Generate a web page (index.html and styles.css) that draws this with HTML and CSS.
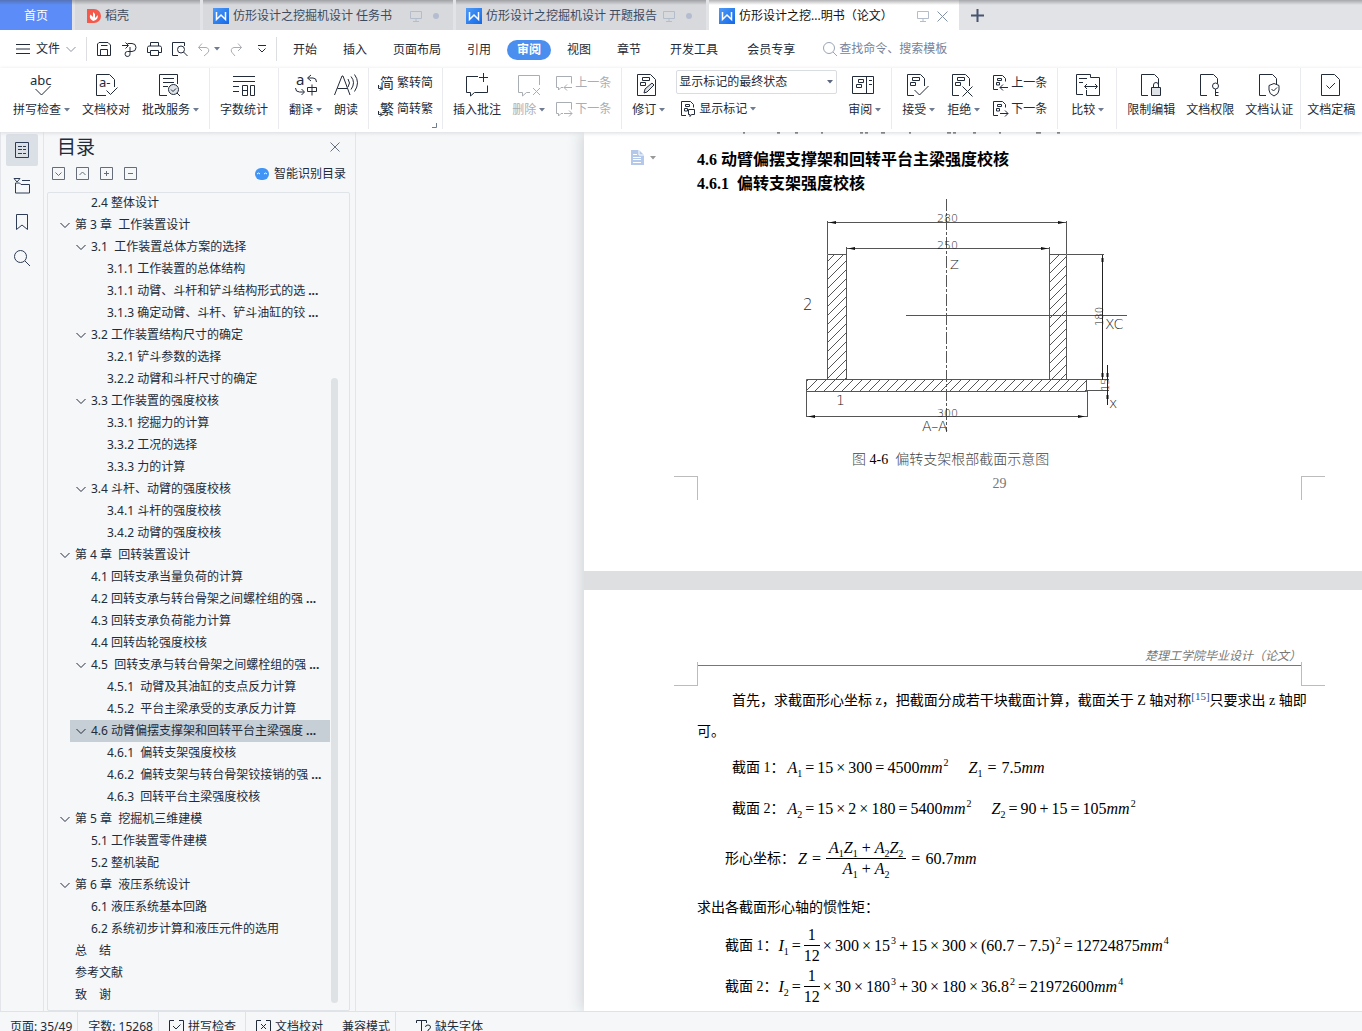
FILE: index.html
```html
<!DOCTYPE html>
<html lang="zh-CN">
<head>
<meta charset="utf-8">
<title>仿形设计之挖掘机设计 说明书（论文）</title>
<link rel="stylesheet" href="styles.css">
</head>
<body>
<svg class="sprite" aria-hidden="true">
  <defs>
    <linearGradient id="blue" x1="0" y1="0" x2="1" y2="1"><stop offset="0" stop-color="#4f9bf7"/><stop offset="1" stop-color="#1268e8"/></linearGradient>
    <pattern id="hatch" width="9" height="9" patternUnits="userSpaceOnUse"><path d="M-1 10L10 -1M-1 1L1 -1M8 10L10 8" stroke="#555" stroke-width="1"/></pattern>
  </defs>
  <symbol id="w" viewBox="0 0 16 16"><rect width="16" height="16" fill="url(#blue)" stroke="none"/><path d="M3.500 4v7.500L8 7l4.500 4.500V4" stroke="#fff" stroke-width="1.500"/></symbol>
  <symbol id="screen" viewBox="0 0 12 12"><path d="M.5 1.500h11v7H.5zM6 8.500v3M3 11.500h6"/></symbol>
  <symbol id="caret" viewBox="0 0 6 6"><path d="M0 1h6L3 4.500z" fill="currentColor" stroke="none"/></symbol>
  <symbol id="chev" viewBox="0 0 10 10"><path d="M.5 3L5 7.500 9.500 3"/></symbol>
  <symbol id="bubble" viewBox="0 0 24 24"><path d="M13 3.500H1.500v16h4V23l4-3.500h13v-7"/></symbol>
  <symbol id="sheet" viewBox="0 0 24 24"><path d="M9 22.500H2.500v-21h13l4 4V13"/></symbol>
  <symbol id="marks" viewBox="0 0 24 24"><path d="M7.500 4.500h7v3h-7zM5.500 9.500h5v3h-5z"/></symbol>
  <symbol id="smallsheet" viewBox="0 0 16 16"><path d="M6 14.500H1.500V.5h9l3 3v3M5.500 3.500h4v2h-4zM4.500 7.500h3v2.500h-3z"/></symbol>
  <symbol id="smallbubble" viewBox="0 0 16 16"><path d="M7 12.500H5L2.500 15v-2.500h-2V1.500h15v7"/></symbol>
</svg>

<nav class="tabs" aria-label="文档标签">
  <button class="tab tab-home">首页</button>
  <button class="tab tab-store"><svg width="14" height="14" viewBox="0 0 14 14"><path d="M0 0h7a7 7 0 0 1 0 14H0z" fill="#f4594b" stroke="none"/><path d="M6.500 12C2 10 2.500 7 3.500 5.500L6 8V3l2 2v4l3-3c0 4-2 5-4.500 6z" fill="#fff" stroke="none"/></svg>稻壳</button>
  <button class="tab tab-doc"><svg width="16" height="16"><use href="#w"/></svg>仿形设计之挖掘机设计 任务书<svg class="dim tab-screen" width="12" height="12"><use href="#screen"/></svg><i class="dot"></i></button>
  <button class="tab tab-doc"><svg width="16" height="16"><use href="#w"/></svg>仿形设计之挖掘机设计 开题报告<svg class="dim tab-near" width="12" height="12"><use href="#screen"/></svg><i class="dot"></i></button>
  <button class="tab tab-doc tab-on"><svg width="16" height="16"><use href="#w"/></svg>仿形设计之挖...明书（论文）<svg class="dim tab-far" width="12" height="12"><use href="#screen"/></svg><svg class="close" width="11" height="11" viewBox="0 0 11 11"><path d="M.5.5l10 10M10.500.5l-10 10"/></svg></button>
  <button class="tab-new" aria-label="新建"><svg width="13" height="13" viewBox="0 0 13 13"><path d="M6.500 0v13M0 6.500h13" stroke-width="2"/></svg></button>
</nav>

<div class="menu">
  <button class="file"><svg width="14" height="10" viewBox="0 0 14 10"><path d="M0 .5h14M0 5h14M0 9.500h14"/></svg>文件<svg class="soft" width="10" height="10"><use href="#chev"/></svg></button>
  <div class="quick">
    <button aria-label="保存"><svg width="15" height="15" viewBox="0 0 15 15"><path d="M.5 13.500V2L2 .5h9L13.500 3v10.500zM3.500 13.500v-6h7v6M4 3.500h6.500"/></svg></button>
    <button aria-label="输出"><svg width="15" height="15" viewBox="0 0 15 15"><path d="M0 3.500h6M3.500.5l3 3-3 3M5.500 1.500H10a4 4 0 0 1 0 8H6M8 5v6.500A2.500 2.500 0 1 1 5.500 9.500H8"/></svg></button>
    <button aria-label="打印"><svg width="15" height="15" viewBox="0 0 15 15"><path d="M3.500 4V.5h8V4M3.500 10.500h-3v-5l1-1.500h12l1 1.500v5h-3M3.500 8.500h8v5h-8z"/></svg></button>
    <button aria-label="打印预览"><svg width="16" height="15" viewBox="0 0 16 15"><path d="M6 13.500H.5V.5h12V4"/><circle cx="9" cy="7.500" r="3.500"/><path d="M11.500 10l4 4"/></svg></button>
    <button class="dim" aria-label="撤销"><svg width="12" height="13" viewBox="0 0 12 13"><path d="M4 .5l-3.500 4L4 8M.5 4.500H8a3 3 0 0 1 2 5L6 13"/></svg></button>
    <button class="near" aria-label="撤销列表"><svg width="6" height="6"><use href="#caret"/></svg></button>
    <button class="dim" aria-label="恢复"><svg width="12" height="13" viewBox="0 0 12 13"><path d="M8 .5l3.500 4L8 8M11.500 4.500H4a3 3 0 0 0-2 5L5 13"/></svg></button>
    <button class="last" aria-label="自定义"><svg width="8" height="8" viewBox="0 0 8 8"><path d="M0 .5h8M.5 3.500L4 7l3.500-3.500"/></svg></button>
  </div>
  <div class="menus">
    <button>开始</button><button>插入</button><button>页面布局</button><button>引用</button><button class="on">审阅</button><button>视图</button><button>章节</button><button class="wide">开发工具</button><button class="wide">会员专享</button>
  </div>
  <label class="search"><svg width="14" height="14" viewBox="0 0 14 14"><circle cx="6" cy="6" r="5.500"/><path d="M10 10l4 4"/></svg><input type="text" aria-label="查找命令" placeholder="查找命令、搜索模板"></label>
</div>

<div class="ribbon">
  <div class="group first">
    <button class="tool"><svg width="24" height="24" viewBox="0 0 24 24"><text x="0" y="12" font-size="13">abc</text><path d="M5.500 16l6 6 9-9"/></svg><span>拼写检查<svg class="caret" width="6" height="6"><use href="#caret"/></svg></span></button>
    <button class="tool"><svg width="24" height="24" viewBox="0 0 24 24"><path d="M12 22.500H2.500v-21h13l5 5V14M12.500 17.500l4 4 7-7"/><text x="5" y="14" font-size="13">a-</text></svg><span>文档校对</span></button>
    <button class="tool"><svg class="pull" width="24" height="24" viewBox="0 0 24 24"><path d="M10 22.500H2.500v-21h18V11M6 5.500h11M6 9.500h11M6 13.500h5"/><circle cx="16.500" cy="16.500" r="5" fill="#dfe3e8"/><path d="M14 16.500l2 2 3-3M20 20l3 3"/></svg><span>批改服务<svg class="caret" width="6" height="6"><use href="#caret"/></svg></span></button>
  </div>
  <div class="group">
    <button class="tool"><svg width="24" height="24" viewBox="0 0 24 24"><path d="M1 3.500h22M1 8.500h22M1 13.500h6M1 18.500h6M10.500 12.500h5v10h-5zM10.500 17.500h5M18.500 12.500h4v10h-4z"/></svg><span>字数统计</span></button>
  </div>
  <div class="group">
    <button class="tool"><svg width="24" height="24" viewBox="0 0 24 24"><text x="2" y="12" font-size="15">a</text><path d="M17 2l-3.500 3L17 8M14 5h5q3.500 0 3.500 4M1.500 15q0 4 4 4H10M7.500 16l3 3-3 3M13.500 14.500h9v4h-9zM18 11.500v11"/></svg><span>翻译<svg class="caret" width="6" height="6"><use href="#caret"/></svg></span></button>
    <button class="tool"><svg width="24" height="24" viewBox="0 0 24 24"><path d="M.5 22L8 3h1l7 19M3.500 15.500h10M14 6q3 4 0 8M17 3.500q5 6 0 13M20.500 1.500q6 8 0 17"/></svg><span>朗读</span></button>
  </div>
  <div class="group convert">
    <div class="stack">
      <button class="line"><svg width="16" height="16" viewBox="0 0 16 16"><text x="2" y="13" font-size="14">简</text><path d="M.5 10v3.500h3M2 11.500l2 2-2 2"/></svg>繁转简</button>
      <button class="line"><svg width="16" height="16" viewBox="0 0 16 16"><text x="2" y="13" font-size="14">繁</text><path d="M.5 10v3.500h3M2 11.500l2 2-2 2"/></svg>简转繁</button>
    </div>
    <svg class="launcher" width="5" height="5" viewBox="0 0 5 5"><path d="M0 4.500h4.500V0"/></svg>
  </div>
  <div class="group tight">
    <button class="tool"><svg width="24" height="24"><use href="#bubble"/><path d="M18.500 0v9M14 4.500h9"/></svg><span>插入批注</span></button>
    <button class="tool dim"><svg width="24" height="24" viewBox="0 0 24 24"><path d="M13 19.500H9.500L5.500 23v-3.500h-4v-17h21V12M16 15l7 7M23 15l-7 7"/></svg><span>删除<svg class="caret" width="6" height="6"><use href="#caret"/></svg></span></button>
    <div class="stack">
      <button class="line dim"><svg width="16" height="16"><use href="#smallbubble"/><path d="M16 12.500H8M11 9.500l-3 3 3 3"/></svg>上一条</button>
      <button class="line dim"><svg width="16" height="16"><use href="#smallbubble"/><path d="M8 12.500h8M13 9.500l3 3-3 3"/></svg>下一条</button>
    </div>
  </div>
  <div class="group tight">
    <button class="tool"><svg class="pull" width="24" height="24" viewBox="0 0 24 24"><path d="M2.500 1.500h13l5 5v16h-18z"/><use href="#marks"/><path d="M9 20l1-4 7-6 2 2-7 7z" fill="#dfe3e8"/></svg><span>修订<svg class="caret" width="6" height="6"><use href="#caret"/></svg></span></button>
    <div class="stack">
      <div class="combo"><select aria-label="显示状态"><option>显示标记的最终状态</option></select><svg width="6" height="6"><use href="#caret"/></svg></div>
      <button class="line inset"><svg width="16" height="16"><use href="#smallsheet"/><path d="M8.500 8.500h6v5h-3l-1.500 2v-2H8.500z" fill="#fff"/></svg>显示标记<svg class="caret" width="6" height="6"><use href="#caret"/></svg></button>
    </div>
    <button class="tool"><svg class="pull" width="24" height="24" viewBox="0 0 24 24"><path d="M1.500 3.500h21v17h-21zM15.500 3.500v17M18 7.500h3M18 11.500h3M7.500 6.500h5v3h-5zM5.500 11.500h5v3h-5z"/></svg><span>审阅<svg class="caret" width="6" height="6"><use href="#caret"/></svg></span></button>
  </div>
  <div class="group">
    <button class="tool"><svg class="pull" width="24" height="24"><use href="#sheet"/><use href="#marks"/><path d="M9.500 17l5 5 9-9"/></svg><span>接受<svg class="caret" width="6" height="6"><use href="#caret"/></svg></span></button>
    <button class="tool"><svg class="pull" width="24" height="24"><use href="#sheet"/><use href="#marks"/><path d="M12.500 13.500l10 10M22.500 13.500l-10 10"/></svg><span>拒绝<svg class="caret" width="6" height="6"><use href="#caret"/></svg></span></button>
    <div class="stack">
      <button class="line"><svg width="16" height="16"><use href="#smallsheet"/><path d="M16 12.500H8M11 9.500l-3 3 3 3"/></svg>上一条</button>
      <button class="line"><svg width="16" height="16"><use href="#smallsheet"/><path d="M8 12.500h8M13 9.500l3 3-3 3"/></svg>下一条</button>
    </div>
  </div>
  <div class="group roomy">
    <button class="tool"><svg width="24" height="24" viewBox="0 0 24 24"><path d="M7 21.500H.5v-20h14v3M3 5.500h8M3 9.500h4M14.500 4.500h9v18h-13V17M9 13.500h12M11 11l-2.500 2.500L11 16M19 11l2.500 2.500L19 16"/></svg><span>比较<svg class="caret" width="6" height="6"><use href="#caret"/></svg></span></button>
  </div>
  <div class="group tight short">
    <button class="tool"><svg width="24" height="24"><use href="#sheet"/><path d="M12.500 14.500h9v8h-9z" fill="#dfe3e8"/><path d="M14.500 14v-2a2.500 2.500 0 0 1 5 0v2"/></svg><span>限制编辑</span></button>
    <button class="tool"><svg width="24" height="24"><use href="#sheet"/><circle cx="17.500" cy="13" r="3" fill="#fff"/><path d="M17.500 16v7M17.500 19.500h3M17.500 22.500h3"/></svg><span>文档权限</span></button>
    <button class="tool"><svg width="24" height="24"><use href="#sheet"/><path d="M17 10.500l5 2V17q0 4-5 6-5-2-5-6v-4.500z" fill="#fff"/><path d="M14.500 16l2 2 3.500-3.500"/></svg><span>文档认证</span></button>
  </div>
  <div class="group end">
    <button class="tool"><svg width="24" height="24" viewBox="0 0 24 24"><path d="M2.500 1.500h13l5 5v16h-18zM7.500 12.500l3 3 5.500-5.500"/></svg><span>文档定稿</span></button>
  </div>
</div>

<div class="work">
  <div class="rail">
    <button class="on" aria-label="目录"><svg width="16" height="16" viewBox="0 0 16 16"><path d="M1.500.5h13v15h-13zM4 4.500h4M9 4.500h3M4 7.500h4M9 7.500h3M4 11.500h4M9 11.500h3"/></svg></button>
    <button aria-label="章节"><svg width="16" height="16" viewBox="0 0 16 16"><path d="M0 .5h6L3 4zM8 2.500h8M1.500 5v10h14V6.500H7L5.500 5z"/></svg></button>
    <button aria-label="书签"><svg width="16" height="16" viewBox="0 0 16 16"><path d="M2.500.5h11v15L8 11l-5.500 4.500z"/></svg></button>
    <button aria-label="查找"><svg width="16" height="16" viewBox="0 0 16 16"><circle cx="6.500" cy="6.500" r="6"/><path d="M11 11l5 5"/></svg></button>
  </div>

  <aside class="outline">
    <div class="outline-head"><h2>目录</h2><button aria-label="关闭"><svg width="10" height="10" viewBox="0 0 10 10"><path d="M.5.5l9 9M9.500.5l-9 9"/></svg></button></div>
    <div class="outline-tools">
      <button aria-label="展开"><svg width="13" height="13" viewBox="0 0 13 13"><path d="M.5.5h12v12H.5zM3.500 5.500l3 3 3-3"/></svg></button>
      <button aria-label="收起"><svg width="13" height="13" viewBox="0 0 13 13"><path d="M.5.5h12v12H.5zM3.500 8l3-3 3 3"/></svg></button>
      <button aria-label="增加"><svg width="13" height="13" viewBox="0 0 13 13"><path d="M.5.5h12v12H.5zM6.500 4v5M4 6.500h5"/></svg></button>
      <button aria-label="减少"><svg width="13" height="13" viewBox="0 0 13 13"><path d="M.5.5h12v12H.5zM4 6.500h5"/></svg></button>
      <button class="smart"><svg width="14" height="12" viewBox="0 0 14 12"><rect width="14" height="12" rx="6" fill="#3f94f5" stroke="none"/><path d="M2 6q1.500-2 3 0M9 6q1.500-2 3 0" stroke="#fff"/></svg>智能识别目录</button>
    </div>
    <div class="tree-box">
      <ul class="tree">
        <li class="l2"><a href="#">2.4 整体设计</a></li>
        <li class="l1 open"><a href="#"><svg width="10" height="10"><use href="#chev"/></svg>第 3 章&nbsp; 工作装置设计</a></li>
        <li class="l2 open"><a href="#"><svg width="10" height="10"><use href="#chev"/></svg>3.1&nbsp; 工作装置总体方案的选择</a></li>
        <li class="l3"><a href="#">3.1.1 工作装置的总体结构</a></li>
        <li class="l3"><a href="#">3.1.1 动臂、斗杆和铲斗结构形式的选<b>...</b></a></li>
        <li class="l3"><a href="#">3.1.3 确定动臂、斗杆、铲斗油缸的铰<b>...</b></a></li>
        <li class="l2 open"><a href="#"><svg width="10" height="10"><use href="#chev"/></svg>3.2 工作装置结构尺寸的确定</a></li>
        <li class="l3"><a href="#">3.2.1 铲斗参数的选择</a></li>
        <li class="l3"><a href="#">3.2.2 动臂和斗杆尺寸的确定</a></li>
        <li class="l2 open"><a href="#"><svg width="10" height="10"><use href="#chev"/></svg>3.3 工作装置的强度校核</a></li>
        <li class="l3"><a href="#">3.3.1 挖掘力的计算</a></li>
        <li class="l3"><a href="#">3.3.2 工况的选择</a></li>
        <li class="l3"><a href="#">3.3.3 力的计算</a></li>
        <li class="l2 open"><a href="#"><svg width="10" height="10"><use href="#chev"/></svg>3.4 斗杆、动臂的强度校核</a></li>
        <li class="l3"><a href="#">3.4.1 斗杆的强度校核</a></li>
        <li class="l3"><a href="#">3.4.2 动臂的强度校核</a></li>
        <li class="l1 open"><a href="#"><svg width="10" height="10"><use href="#chev"/></svg>第 4 章&nbsp; 回转装置设计</a></li>
        <li class="l2"><a href="#">4.1 回转支承当量负荷的计算</a></li>
        <li class="l2"><a href="#">4.2 回转支承与转台骨架之间螺栓组的强<b>...</b></a></li>
        <li class="l2"><a href="#">4.3 回转支承负荷能力计算</a></li>
        <li class="l2"><a href="#">4.4 回转齿轮强度校核</a></li>
        <li class="l2 open"><a href="#"><svg width="10" height="10"><use href="#chev"/></svg>4.5&nbsp; 回转支承与转台骨架之间螺栓组的强<b>...</b></a></li>
        <li class="l3"><a href="#">4.5.1&nbsp; 动臂及其油缸的支点反力计算</a></li>
        <li class="l3"><a href="#">4.5.2&nbsp; 平台主梁承受的支承反力计算</a></li>
        <li class="l2 open on"><a href="#"><svg width="10" height="10"><use href="#chev"/></svg>4.6 动臂偏摆支撑架和回转平台主梁强度<b>...</b></a></li>
        <li class="l3"><a href="#">4.6.1&nbsp; 偏转支架强度校核</a></li>
        <li class="l3"><a href="#">4.6.2&nbsp; 偏转支架与转台骨架铰接销的强<b>...</b></a></li>
        <li class="l3"><a href="#">4.6.3&nbsp; 回转平台主梁强度校核</a></li>
        <li class="l1 open"><a href="#"><svg width="10" height="10"><use href="#chev"/></svg>第 5 章&nbsp; 挖掘机三维建模</a></li>
        <li class="l2"><a href="#">5.1 工作装置零件建模</a></li>
        <li class="l2"><a href="#">5.2 整机装配</a></li>
        <li class="l1 open"><a href="#"><svg width="10" height="10"><use href="#chev"/></svg>第 6 章&nbsp; 液压系统设计</a></li>
        <li class="l2"><a href="#">6.1 液压系统基本回路</a></li>
        <li class="l2"><a href="#">6.2 系统初步计算和液压元件的选用</a></li>
        <li class="l1"><a href="#">总　结</a></li>
        <li class="l1"><a href="#">参考文献</a></li>
        <li class="l1"><a href="#">致　谢</a></li>
      </ul>
      <i class="thumb"></i>
    </div>
  </aside>

  <main class="canvas">
    <div class="pages">
      <section class="page page-first">
        <svg class="cut" width="330" height="2" viewBox="0 0 330 2"><path d="M2 .5h2M36 .5h3M54 .5h3M80 .5h2M119 .5h3M124 .5h3M140 .5h4M168 .5h2M206 .5h4M212 .5h3M232 .5h3M258 .5h2M295 .5h5M316 .5h3" stroke="#000" stroke-width="2"/></svg>
        <button class="para-mark" aria-label="段落"><svg width="13" height="15" viewBox="0 0 13 15"><path d="M0 0h8l5 5v10H0z" fill="#b4c9e9" stroke="none"/><path d="M8 0v5h5M2 4.500h4M2 7.500h8M2 9.500h8M2 12.500h8" stroke="#fff"/></svg><svg width="6" height="6"><use href="#caret"/></svg></button>
        <h3>4.6 动臂偏摆支撑架和回转平台主梁强度校核</h3>
        <h3>4.6.1&nbsp; 偏转支架强度校核</h3>
        <figure>
          <svg class="drawing" width="336" height="250" viewBox="800 196 336 250">
            <g stroke="#555">
              <path d="M827.500 254.500h19v125h-19zM1049.500 254.500h17v125h-17zM806.500 379.500h280v12h-280z" fill="url(#hatch)"/>
              <path d="M827.500 221v33M1066.500 221v33M846.500 247v8M1049.500 247v8M828 222.500h239M847 248.500h203M1067 254.500h37M906 315.500h221M1071 379.500h38M1087 390.500h22M806.500 391v26M1087.500 391v26M807 416.500h280"/>
              <path d="M1102.500 255v125M1107.500 365v40" stroke="#222"/>
              <path d="M946.500 199v233" stroke-dasharray="12 2 3 2"/>
            </g>
            <path d="M829 222.500l7-1.500v3zM1065 222.500l-7-1.500v3zM848 248.500l7-1.500v3zM1048 248.500l-7-1.500v3zM808 416.500l7-1.500v3zM1085 416.500l-7-1.500v3zM1101.500 258h2v4h-2zM1101.500 373h2v4h-2zM1106.500 373h2v4h-2zM1106.500 395h2v4h-2z" fill="#111" stroke="none"/>
            <g class="dims">
              <text x="937" y="222">280</text><text x="937" y="249">250</text><text x="937" y="417">300</text>
              <text x="950" y="269" font-size="13">Z</text><text x="803" y="310" font-size="15">2</text><text x="836" y="405" font-size="14">1</text>
              <text x="1105" y="329" font-size="14">XC</text><text x="1109" y="408" font-size="14">x</text><text x="922" y="431" font-size="14">A–A</text>
              <text transform="translate(1103 326) rotate(-90)" font-size="10">180</text><text transform="translate(1109 391) rotate(-90)" font-size="10">15</text>
            </g>
          </svg>
          <figcaption>图 <span>4-6</span>&nbsp; 偏转支架根部截面示意图</figcaption>
        </figure>
        <footer class="corners"><i class="corner top-left"></i><span>29</span><i class="corner top-right"></i></footer>
      </section>

      <section class="page page-next">
        <header>楚理工学院毕业设计（论文）</header>
        <div class="corners lower"><i class="corner bottom-left"></i><i class="corner bottom-right"></i></div>
        <p class="body">首先，求截面形心坐标 z，把截面分成若干块截面计算，截面关于 Z 轴对称<sup>[15]</sup>只要求出 z 轴即<br>可。</p>
        <div class="eq indent">截面 1：<div class="math"><span><i>A</i><sub>1</sub></span><span>=</span><span>15</span><span>×</span><span>300</span><span>=</span><span>4500<i>mm</i><sup>2</sup></span></div><div class="math second wide"><span><i>Z</i><sub>1</sub></span><span>=</span><span>7.5<i>mm</i></span></div></div>
        <div class="eq indent low">截面 2：<div class="math"><span><i>A</i><sub>2</sub></span><span>=</span><span>15</span><span>×</span><span>2</span><span>×</span><span>180</span><span>=</span><span>5400<i>mm</i><sup>2</sup></span></div><div class="math second"><span><i>Z</i><sub>2</sub></span><span>=</span><span>90</span><span>+</span><span>15</span><span>=</span><span>105<i>mm</i><sup>2</sup></span></div></div>
        <div class="eq tall">形心坐标：<div class="math wide"><span><i>Z</i></span><span>=</span><div class="frac long"><span><i>A</i><sub>1</sub><i>Z</i><sub>1</sub> + <i>A</i><sub>2</sub><i>Z</i><sub>2</sub></span><span><i>A</i><sub>1</sub> + <i>A</i><sub>2</sub></span></div><span>=</span><span>60.7<i>mm</i></span></div></div>
        <p class="plain">求出各截面形心轴的惯性矩：</p>
        <div class="eq low">截面 1：<div class="math flush"><span><i>I</i><sub>1</sub></span><span>=</span><div class="frac"><span>1</span><span>12</span></div><span>×</span><span>300</span><span>×</span><span>15<sup>3</sup></span><span>+</span><span>15</span><span>×</span><span>300</span><span>×</span><span>(60.7</span><span>−</span><span>7.5)<sup>2</sup></span><span>=</span><span>12724875<i>mm</i><sup>4</sup></span></div></div>
        <div class="eq">截面 2：<div class="math flush"><span><i>I</i><sub>2</sub></span><span>=</span><div class="frac"><span>1</span><span>12</span></div><span>×</span><span>30</span><span>×</span><span>180<sup>3</sup></span><span>+</span><span>30</span><span>×</span><span>180</span><span>×</span><span>36.8<sup>2</sup></span><span>=</span><span>21972600<i>mm</i><sup>4</sup></span></div></div>
      </section>
    </div>
  </main>
</div>

<footer class="status">
  <span class="cell">页面: 35/49</span>
  <span class="cell">字数: 15268</span>
  <button class="cell"><svg width="15" height="15" viewBox="0 0 15 15"><path d="M5 .5H.5v14h14V.5H10M4 6l3 3 4.500-4.500"/></svg>拼写检查</button>
  <button class="cell open-cell"><svg width="15" height="15" viewBox="0 0 15 15"><path d="M5 .5H.5v14h14V.5H10M5 4l5 5M10 4l-5 5"/></svg>文档校对</button>
  <span class="cell mode">兼容模式</span>
  <button class="cell fonts"><svg width="15" height="15" viewBox="0 0 15 15"><path d="M.5 3V.5h10V3M5.500.5v13M3 13.500h4M9.500 7q0-2 2.500-2t2.500 2-2.500 3v2M12 13v2"/></svg>缺失字体</button>
</footer>
</body>
</html>
```
FILE: styles.css
```css
* { box-sizing: border-box; }

body {
  margin: 0;
  height: 100vh;
  display: flex;
  flex-direction: column;
  overflow: hidden;
  background: #fff;
  color: #222b3a;
  font: 12px/16px "Noto Sans", "Noto Sans CJK SC", sans-serif;
}

button {
  margin: 0;
  padding: 0;
  border: 0;
  background: none;
  color: inherit;
  font: inherit;
  white-space: nowrap;
}

svg {
  display: block;
  flex: none;
  fill: none;
  stroke: currentColor;
  overflow: visible;
}

svg text { fill: currentColor; stroke: none; }
.sprite { position: absolute; width: 0; height: 0; }
.dim { color: #a9adb4; }
svg.dim { color: #b4bdcb; }
.soft { color: #8b93a0; }
.caret { color: #6e7b91; }

/* document tabs */
.tabs {
  flex: none;
  display: flex;
  height: 30px;
  background: linear-gradient(#a6a7aa, #e1e3e7 5px);
}
.tab {
  display: flex;
  align-items: center;
  gap: 4px;
  padding-top: 2px;
  border-right: 3px solid #e1e3e7;
  background: linear-gradient(#a0a1a4, #d8d9dd 5px);
  color: #3c4a60;
}
.tab-home {
  width: 72px;
  justify-content: center;
  margin-right: 3px;
  border: 0;
  background: linear-gradient(#5573b8, #5b8cf7 5px);
  color: #fff;
}
.tab-store { width: 128px; padding-left: 12px; }
.tab-doc { width: 253px; padding-left: 10px; }
.tab-on {
  border: 0;
  width: 250px;
  background: linear-gradient(#b4b4b6, #fff 5px);
  color: #111;
}
.tab-screen { margin-left: 14px; }
.tab-near { margin-left: 2px; }
.tab-far { margin-left: 20px; }
.dot { width: 6px; height: 6px; margin-left: 7px; border-radius: 3px; background: #b4bdd0; }
.close { margin-left: 4px; color: #8291ab; }
.tab-new { width: 36px; display: flex; align-items: center; justify-content: center; color: #465570; }

/* menu row */
.menu { flex: none; display: flex; align-items: center; height: 38px; }
.file { display: flex; align-items: center; gap: 6px; width: 87px; height: 24px; padding-left: 16px; border-right: 1px solid #dcdee2; }
.quick { display: flex; align-items: center; gap: 10px; width: 190px; height: 24px; padding-left: 10px; border-right: 1px solid #dcdee2; }
.quick .near { margin-left: -6px; color: #6e7b91; }
.quick .last { margin-left: 6px; }
.menus { display: flex; gap: 6px; padding: 1px 0 0 6px; }
.menus button { height: 20px; padding: 0 10px; }
.menus .on { border-radius: 10px; background: #4a8ff0; color: #fff; font-weight: 700; }
.menus .wide { margin-left: 3px; }
.search { display: flex; align-items: center; gap: 2px; margin-left: 18px; color: #9aa4b5; }
.search input { width: 130px; padding: 0; border: 0; background: none; font: inherit; }
.search input::placeholder { color: #76839b; opacity: 1; }

/* ribbon */
.ribbon {
  flex: none;
  position: relative;
  z-index: 1;
  display: flex;
  height: 64px;
  padding-bottom: 3px;
  box-shadow: 0 1px 4px #d8dadd;
  background: #fff;
}
.group { position: relative; flex: none; display: flex; gap: 12px; padding: 5px 10px 0; border-right: 1px solid #e9ebee; }
.first { margin-left: 3px; }
.convert { padding: 5px 9px 0; }
.tight { gap: 11px; }
.roomy { padding-left: 13px; padding-right: 12px; }
.short { padding-right: 7px; }
.end { padding-left: 6px; border: 0; }
.tool { display: flex; flex-direction: column; align-items: center; gap: 5px; align-self: flex-start; }
.tool span { display: flex; align-items: center; gap: 3px; }
.pull { margin-right: 3px; }
.stack { display: flex; flex-direction: column; gap: 6px; }
.line { display: flex; align-items: center; gap: 3px; height: 20px; }
.inset { padding-left: 4px; }
.launcher { position: absolute; right: 5px; bottom: 1px; color: #6e7b91; }
.combo { position: relative; width: 161px; height: 24px; margin: -3px 0 -1px; }
.combo select {
  width: 100%;
  height: 24px;
  padding: 0 2px;
  appearance: none;
  border: 1px solid #d9dce1;
  border-radius: 2px;
  background: #fff;
  color: inherit;
  font: inherit;
}
.combo svg { position: absolute; right: 4px; top: 9px; color: #5b6880; }

/* work area */
.work { flex: 1; min-height: 0; display: flex; background: #f5f7f9; }
.rail {
  flex: none;
  display: flex;
  flex-direction: column;
  gap: 4px;
  width: 44px;
  padding: 2px 5px;
  border-left: 1px solid #e3e5ea;
  border-right: 1px solid #e3e5ea;
  color: #2f3c55;
}
.rail button { display: flex; align-items: center; justify-content: center; width: 32px; height: 32px; border-radius: 2px; }
.rail .on { background: #dae0e6; }

.outline { flex: none; display: flex; flex-direction: column; width: 312px; padding: 0 5px 0 3px; border-right: 1px solid #e3e5ea; }
.outline-head { display: flex; align-items: center; justify-content: space-between; height: 29px; padding: 0 10px; }
.outline-head h2 { margin: 0; font-size: 19px; line-height: 28px; font-weight: 400; }
.outline-head button { color: #68717f; }
.outline-tools { display: flex; align-items: center; gap: 11px; height: 25px; padding: 0 4px 0 5px; color: #666d78; }
.smart { display: flex; align-items: center; gap: 5px; margin-left: auto; color: #222b3a; }
.tree-box { position: relative; flex: 1; min-height: 0; margin: 6px 0 0; border: 1px solid #e0e3e8; border-radius: 2px; overflow: hidden; }
.tree { margin: -1px 0 0; padding: 0 19px 0 6px; list-style: none; }
.tree li { height: 22px; }
.tree a { display: flex; align-items: center; height: 22px; padding-left: 21px; color: inherit; text-decoration: none; white-space: pre; }
.tree .open a { padding-left: 6px; }
.tree .open svg { margin-right: 5px; }
.tree .l2 { margin-left: 16px; }
.tree .l3 { margin-left: 32px; }
.tree .on { background: #c6ced6; }
.tree b { margin-left: 3px; }
.thumb { position: absolute; right: 11px; top: 185px; bottom: 7px; width: 7px; border-radius: 4px; background: #dfe2e5; }

/* document canvas */
.canvas { flex: 1; min-width: 0; overflow: hidden; padding-left: 228px; }
.pages {
  display: flex;
  flex-direction: column;
  gap: 19px;
  width: 830px;
  min-height: 100%;
  background: #dddfe1;
  box-shadow: -2px 0 14px #cfd2d5;
  color: #000;
  font: 14px/20px "Liberation Serif", "Noto Sans CJK SC", serif;
}
.page { position: relative; padding: 0 113px; background: #fff; }
.page-first { padding-bottom: 71px; }
.page-next { flex: 1; padding-top: 57px; }
.cut { margin: 0 0 14px 44px; }
.para-mark { position: absolute; left: 47px; top: 18px; display: flex; align-items: center; gap: 6px; color: #999; }
h3 { margin: 0; font-size: 16px; line-height: 24px; font-weight: 700; }
figure { margin: 0; }
.drawing { margin-left: 103px; }
.dims { color: #222; font: 11px "DejaVu Sans", sans-serif; font-weight: 200; }
figcaption { padding: 4px 0 6px 155px; color: #444; font-weight: 300; }
figcaption span { color: #000; font-weight: 400; }
.corners { display: flex; justify-content: space-between; height: 24px; margin: 0 -24px 0 -23px; color: #777; line-height: 16px; }
.lower { height: 23px; margin-top: -4px; }
.corner { width: 24px; height: 24px; border: 0 solid #bcbcbc; }
.top-left { border-width: 1px 1px 0 0; }
.top-right { border-width: 1px 0 0 1px; }
.bottom-left { border-width: 0 1px 1px 0; }
.bottom-right { border-width: 0 0 1px 1px; }
.page-next header { border-bottom: 1px solid #777; color: #777; font-size: 12px; line-height: 18px; font-style: italic; text-align: right; }
.body { margin: 0; text-indent: 35px; line-height: 31px; white-space: nowrap; }
.body sup { color: #1f4e8c; font-size: 11px; line-height: 0; vertical-align: 5px; }
.plain { margin: 0; padding-top: 1px; line-height: 36px; }
.eq { display: flex; align-items: center; height: 42px; padding-left: 28px; white-space: nowrap; }
.indent { padding-left: 35px; }
.low { height: 40px; }
.tall { height: 60px; }
.math { display: flex; align-items: center; gap: 3px; margin-left: 3px; padding-bottom: 1px; font-size: 16px; line-height: 20px; }
.flush { margin-left: 1px; }
.second { margin-left: 20px; }
.wide { gap: 5px; }
.math sub, .math sup { font-size: 10px; line-height: 0; }
.math sub { vertical-align: -4px; }
.math sup { margin-left: 1px; vertical-align: 7px; }
.frac { display: flex; flex-direction: column; align-items: center; }
.frac > span:first-child { align-self: stretch; border-bottom: 1px solid #000; text-align: center; }
.long > span:first-child { padding: 0 3px; }

/* status bar */
.status { flex: none; display: flex; height: 20px; overflow: hidden; border-top: 1px solid #dfe2e7; background: #f5f7f9; }
.cell { display: flex; align-items: center; gap: 4px; height: 30px; padding: 0 5px 0 10px; border-right: 1px solid #dfe2e7; }
button.cell { padding-right: 9px; }
.open-cell, .fonts { border: 0; }
.mode { padding-left: 10px; }
.cell.fonts { padding-left: 20px; }
```
